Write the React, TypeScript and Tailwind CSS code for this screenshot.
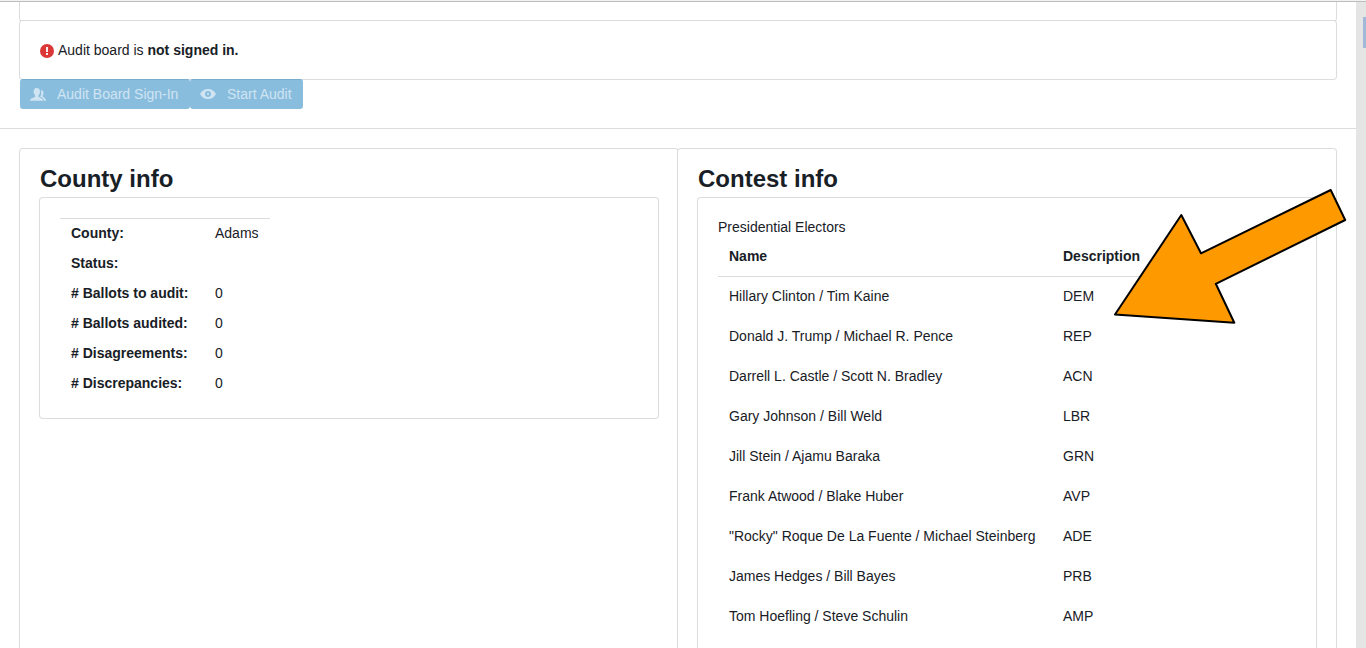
import type { ReactNode } from 'react';

const candidates: [string, string][] = [
  ['Hillary Clinton / Tim Kaine', 'DEM'],
  ['Donald J. Trump / Michael R. Pence', 'REP'],
  ['Darrell L. Castle / Scott N. Bradley', 'ACN'],
  ['Gary Johnson / Bill Weld', 'LBR'],
  ['Jill Stein / Ajamu Baraka', 'GRN'],
  ['Frank Atwood / Blake Huber', 'AVP'],
  ['"Rocky" Roque De La Fuente / Michael Steinberg', 'ADE'],
  ['James Hedges / Bill Bayes', 'PRB'],
  ['Tom Hoefling / Steve Schulin', 'AMP'],
];

const countyRows: [string, string][] = [
  ['County:', 'Adams'],
  ['Status:', ''],
  ['# Ballots to audit:', '0'],
  ['# Ballots audited:', '0'],
  ['# Disagreements:', '0'],
  ['# Discrepancies:', '0'],
];

function ErrorIcon() {
  return (
    <svg className="mt-[2px] size-[14px]" viewBox="0 0 14 14" aria-hidden="true">
      <circle cx="7" cy="7" r="7" fill="#db3737" />
      <path d="M6.100 3h1.800v5H6.100zM6.100 9h1.800v2H6.100z" fill="#fff" />
    </svg>
  );
}

function PeopleIcon() {
  return (
    <svg className="size-4" viewBox="0 0 16 16" fill="currentColor" aria-hidden="true">
      <path d="M10.800 4.200c1.700-.4 2.800.9 2.700 2.800.2.700-.1 1.300-.6 2-.3.600-.3 1.200.1 1.700.8.800 2.700 1.300 3 4.100h-2.100c-.3-2.200-1.600-3-3.200-3.700l-.7-.4c.9-1.200 1.300-2.200 1.300-3.400 0-1.200-.1-2.200-.5-3.100z" />
      <path d="M6.700 2C4.600 2 3.500 3.500 3.700 5.600c-.2.500-.2 1 0 1.500.2.500.5.800.7 1.200.3.800.8 1.100.8 1.900C5.200 11.800 0 11.700 0 14.800h13.200c0-3.100-4.800-3-4.800-4.600 0-.8.5-1.100.8-1.900.2-.4.500-.7.700-1.200.2-.5.200-1 0-1.500C10.100 3.500 8.900 2 6.700 2z" />
    </svg>
  );
}

function EyeIcon() {
  return (
    <svg className="size-4" viewBox="0 0 16 16" fill="currentColor" aria-hidden="true">
      <path
        fillRule="evenodd"
        d="M8 3C4.500 3 1.600 5 0 8c1.600 3 4.500 5 8 5s6.400-2 8-5c-1.600-3-4.500-5-8-5zm0 8a3 3 0 1 1 0-6 3 3 0 0 1 0 6zM8 6.900a1.100 1.100 0 1 0 0 2.200 1.100 1.100 0 0 0 0-2.200z"
      />
    </svg>
  );
}

function ActionButton({ icon, width, children }: { icon: ReactNode; width: string; children: ReactNode }) {
  return (
    <button
      type="button"
      disabled
      className={`flex h-[30px] items-center gap-[11px] rounded-[3px] bg-[#137cbd]/50 px-[10px] text-white/60 ${width}`}
    >
      {icon}
      {children}
    </button>
  );
}

function InfoPanel({ title, children }: { title: string; children: ReactNode }) {
  return (
    <section className="flex flex-1 flex-col rounded-t-[3px] bg-white px-5 pt-5 shadow-[0_0_0_1px_#dbdcdd]">
      <h2 className="mb-[10px] text-2xl leading-[19px] font-bold">{title}</h2>
      {children}
    </section>
  );
}

export default function App() {
  return (
    <div className="flex h-screen flex-col overflow-hidden bg-white font-['Liberation_Sans',Arial,sans-serif] text-sm leading-[18px] text-[#182026]">
      <div className="h-[2px] shrink-0 border-b border-[#bdbdbd] bg-[#f2f2f2]" />
      <div className="flex min-h-0 flex-1">
        <main className="flex flex-1 flex-col overflow-hidden">
          <div className="shrink-0 px-5 pb-5">
            <div className="h-[19px] rounded-b-[3px] shadow-[0_0_0_1px_#dbdcdd]" />
            <div className="flex items-center gap-1 rounded-[3px] bg-white p-5 shadow-[0_0_0_1px_#dbdcdd]">
              <ErrorIcon />
              <p>
                Audit board is <strong>not signed in.</strong>
              </p>
            </div>
            <div className="flex">
              <ActionButton icon={<PeopleIcon />} width="min-w-[170px]">Audit Board Sign-In</ActionButton>
              <ActionButton icon={<EyeIcon />} width="min-w-[113px]">Start Audit</ActionButton>
            </div>
          </div>
          <div className="flex flex-1 px-5 pt-5 shadow-[0_0_0_1px_#dbdcdd]">
            <InfoPanel title="County info">
              <div className="rounded-[3px] p-5 shadow-[0_0_0_1px_#dbdcdd]">
                <table className="w-[210px]">
                  <tbody>
                    {countyRows.map(([label, value], i) => (
                      <tr key={label} className={i === 0 ? 'shadow-[inset_0_1px_0_0_#dbdcdd]' : ''}>
                        <th scope="row" className="w-[144px] px-[11px] py-[6px] text-left font-bold">
                          {label}
                        </th>
                        <td className="px-[11px] py-[6px]">{value}</td>
                      </tr>
                    ))}
                  </tbody>
                </table>
              </div>
            </InfoPanel>
            <InfoPanel title="Contest info">
              <div className="flex-1 rounded-t-[3px] px-5 pt-5 shadow-[0_0_0_1px_#dbdcdd]">
                <p>Presidential Electors</p>
                <table className="w-[434px]">
                  <thead>
                    <tr className="text-left">
                      <th scope="col" className="w-[334px] p-[11px]">Name</th>
                      <th scope="col" className="p-[11px]">Description</th>
                    </tr>
                  </thead>
                  <tbody>
                    {candidates.map(([name, party], i) => (
                      <tr key={name} className={i === 0 ? 'shadow-[inset_0_1px_0_0_#dbdcdd]' : ''}>
                        <td className="p-[11px]">{name}</td>
                        <td className="p-[11px]">{party}</td>
                      </tr>
                    ))}
                  </tbody>
                </table>
              </div>
            </InfoPanel>
          </div>
        </main>
        <div className="z-10 flex w-[10px] shrink-0 justify-end bg-[#e5e5e5] pt-[15px]">
          <div className="h-[31px] w-[3px] bg-[#9fb9d7]" />
        </div>
      </div>
      <svg
        className="pointer-events-none absolute top-[180px] right-0 z-20 h-[160px] w-[266px]"
        viewBox="0 0 266 160"
        aria-hidden="true"
      >
        <path
          d="M15 134.500 81.300 35 101 73.300 230.700 10 245.200 40 115.800 103.800 134.300 142.700z"
          fill="#ff9900"
          stroke="#000"
          strokeWidth="2"
          strokeLinejoin="round"
        />
      </svg>
    </div>
  );
}
